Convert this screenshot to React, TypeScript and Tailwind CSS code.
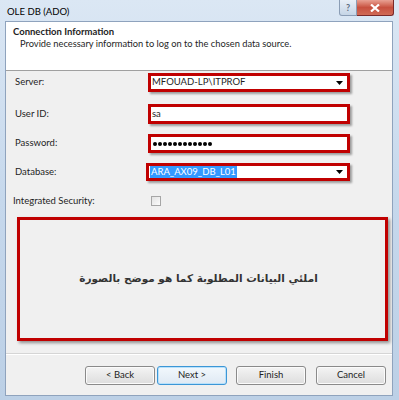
const ui = "font-['Lato',sans-serif]";

function Arrow() {
  return (
    <svg width="7" height="4" viewBox="0 0 7 4" className="ml-auto mr-[4px]">
      <path d="M0 0h7L3.5 4z" fill="#000" />
    </svg>
  );
}

function RedBox({ children, className = '' }: { children?: React.ReactNode; className?: string }) {
  return (
    <div
      className={`flex items-center border-[3px] border-[#c00000] bg-white shadow-[2px_2px_2px_rgba(0,0,0,0.35)] ${className}`}
    >
      {children}
    </div>
  );
}

function Row({ label, children, top }: { label: string; children: React.ReactNode; top: string }) {
  return (
    <div className={`flex items-center ${top}`}>
      <div className="w-[142px] pl-[9px] text-[9.5px] text-[#1e1e1e]">{label}</div>
      {children}
    </div>
  );
}

function Btn({ label, active, className = '' }: { label: string; active?: boolean; className?: string }) {
  return (
    <div
      className={`flex h-[19px] w-[70px] items-center justify-center rounded-[3px] border text-[9.5px] text-[#1e1e1e] ${className} ${
        active
          ? 'border-[#3c96d6] bg-gradient-to-b from-[#f2f8fd] to-[#dfe9f3] shadow-[inset_0_0_0_1px_#b8e1fb]'
          : 'border-[#8a8a8a] bg-gradient-to-b from-[#f4f4f4] to-[#dddddd] shadow-[inset_0_0_0_1px_#fbfbfb]'
      }`}
    >
      {label}
    </div>
  );
}

export default function App() {
  return (
    <div className={`${ui} flex h-[400px] w-[399px] flex-col overflow-hidden bg-gradient-to-b from-[#dbe7f4] via-[#c6d8ec] to-[#bcd0e6]`}>
      {/* title bar */}
      <div className="flex h-[21px] shrink-0 items-start">
        <div className="pl-[7px] pt-[5px] text-[9.5px] text-black">OLE DB (ADO)</div>
        <div className="ml-auto mr-[5px] flex">
          <div className="flex h-[16px] w-[18px] items-center justify-center rounded-bl-[3px] border border-t-0 border-[#8b9db5] bg-gradient-to-b from-[#e8eff7] to-[#c6d5e6] text-[9px] font-bold text-[#5a6b80]">
            ?
          </div>
          <div className="flex h-[16px] w-[37px] items-center justify-center rounded-br-[3px] border border-l-0 border-t-0 border-[#7a2a2a] bg-gradient-to-b from-[#e8a093] via-[#c7503f] to-[#d06a55]">
            <svg width="10" height="8" viewBox="0 0 10 8">
              <path d="M1 0.5L9 7.5M9 0.5L1 7.5" stroke="#fff" strokeWidth="2.2" />
            </svg>
          </div>
        </div>
      </div>

      {/* client area */}
      <div className="ml-[5px] mr-[6px] flex h-[375px] shrink-0 flex-col border border-[#8fa3bd] bg-[#f0f0f0]">
        <div className="h-[49px] shrink-0 border-b border-[#a0a0a0] bg-white pl-[7px] pt-[4px]">
          <div className="text-[9.5px] font-bold leading-[12px] text-[#1e1e1e]">Connection Information</div>
          <div className="pl-[7px] text-[9.3px] leading-[12px] text-[#1e1e1e]">
            Provide necessary information to log on to the chosen data source.
          </div>
        </div>

        <Row label="Server:" top="mt-[2px]">
          <RedBox className="h-[19px] w-[202px]">
            <span className="pl-[1px] text-[9.5px] text-[#1e1e1e]">MFOUAD-LP\ITPROF</span>
            <Arrow />
          </RedBox>
        </Row>
        <Row label="User ID:" top="mt-[12px]">
          <RedBox className="h-[20px] w-[202px]">
            <span className="pl-[1px] text-[9.5px] text-[#1e1e1e]">sa</span>
          </RedBox>
        </Row>
        <Row label="Password:" top="mt-[10px]">
          <RedBox className="h-[19px] w-[202px]">
            <div className="flex gap-[1px] pl-[2px]">
              {Array.from({ length: 12 }).map((_, i) => (
                <div key={i} className="h-[4px] w-[4px] rounded-full bg-black" />
              ))}
            </div>
          </RedBox>
        </Row>
        <Row label="Database:" top="mt-[10px]">
          <RedBox className="-ml-[2px] h-[18px] w-[204px]">
            <span className="ml-[1px] bg-[#3399ff] px-[1px] text-[9.5px] leading-[12px] text-white">ARA_AX09_DB_L01</span>
            <Arrow />
          </RedBox>
        </Row>
        <div className="mt-[15px] flex h-[10px] items-center">
          <div className="w-[145px] pl-[7px] text-[9.5px] text-[#1e1e1e]">Integrated Security:</div>
          <div className="h-[10px] w-[10px] border border-[#a6a6a6] bg-gradient-to-br from-[#e2e2e2] to-[#fbfbfb]" />
        </div>

        <div className="ml-[11px] mt-[11px] flex h-[124px] w-[371px] shrink-0 items-center justify-center border-[3px] border-[#c00000] bg-[#f0f0f0] shadow-[2px_2px_3px_rgba(0,0,0,0.4)]">
          <span dir="rtl" className="-ml-[8px] font-['DejaVu_Sans',sans-serif] text-[10.5px] font-bold text-[#333]">
            املئي البيانات المطلوبة كما هو موضح بالصورة
          </span>
        </div>

        <div className="mt-[12px] h-[1px] shrink-0 bg-[#d5d5d5]" />
        <div className="h-[1px] shrink-0 bg-white" />
        <div className="mt-[11px] flex pl-[79px]">
          <Btn label="< Back" />
          <Btn label="Next >" active className="ml-[2px]" />
          <Btn label="Finish" className="ml-[9px]" />
          <Btn label="Cancel" className="ml-[10px]" />
        </div>
      </div>
    </div>
  );
}
